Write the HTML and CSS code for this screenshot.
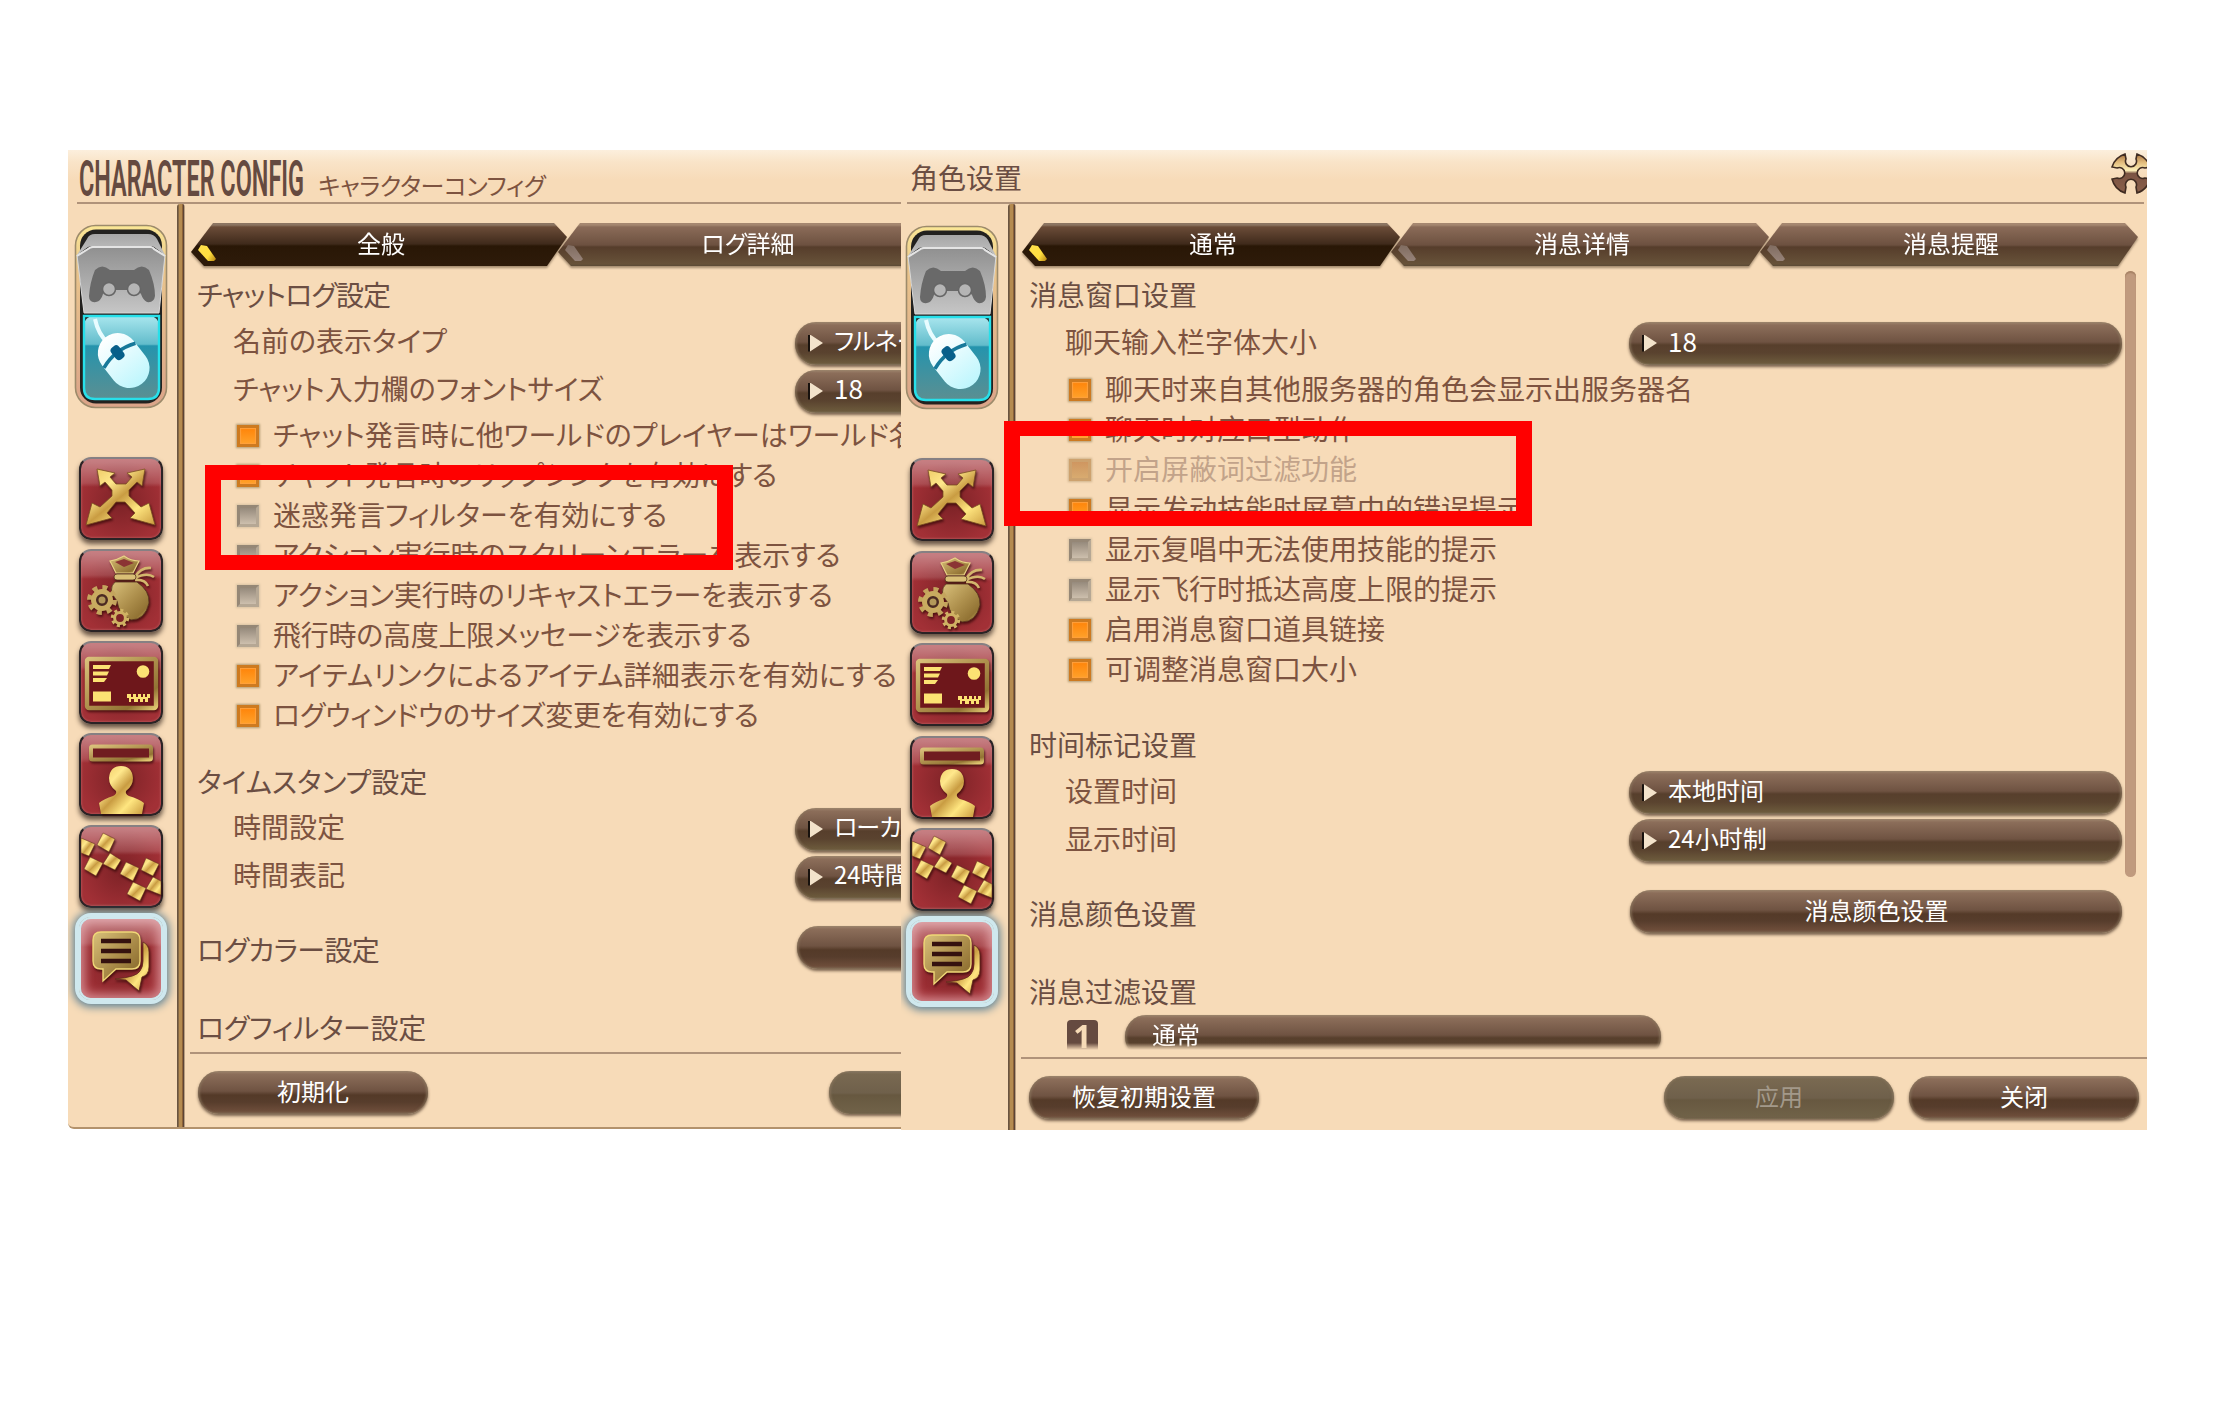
FILE: index.html
```html
<!DOCTYPE html>
<html lang="ja">
<head>
<meta charset="utf-8">
<title>Character Config</title>
<link rel="stylesheet" href="styles.css">
</head>
<body>
<svg class="defs" aria-hidden="true">
  <defs>
    <linearGradient id="gold" x1="0" y1="0" x2="1" y2="1">
      <stop offset="0" stop-color="#e9c25c"/><stop offset=".3" stop-color="#ffe88c"/><stop offset=".5" stop-color="#c99c42"/><stop offset=".72" stop-color="#ffe680"/><stop offset="1" stop-color="#c99a3e"/>
    </linearGradient>
    <linearGradient id="brass" x1="0" y1="0" x2="1" y2="1">
      <stop offset="0" stop-color="#d9c07a"/><stop offset=".5" stop-color="#ad8f4c"/><stop offset=".8" stop-color="#927334"/><stop offset="1" stop-color="#e0c670"/>
    </linearGradient>
    <linearGradient id="rim" x1="0" y1="0" x2="0" y2="1">
      <stop offset="0" stop-color="#fbe795"/><stop offset=".25" stop-color="#e9c48c"/><stop offset="1" stop-color="#dba489"/>
    </linearGradient>
    <linearGradient id="paddle" x1="0" y1="0" x2="0" y2="1">
      <stop offset="0" stop-color="#8f8f8f"/><stop offset="1" stop-color="#c6c6c6"/>
    </linearGradient>
    <linearGradient id="lid" x1="0" y1="0" x2="0" y2="1">
      <stop offset="0" stop-color="#a6a6a6"/><stop offset="1" stop-color="#c2c2c2"/>
    </linearGradient>
    <linearGradient id="glass" x1="0" y1="0" x2="0" y2="1">
      <stop offset="0" stop-color="#a9e6ee"/><stop offset=".34" stop-color="#62bccb"/><stop offset=".36" stop-color="#2594ad"/><stop offset="1" stop-color="#5b8f92"/>
    </linearGradient>
    <linearGradient id="mouseFill" x1="0" y1="0" x2="0" y2="1">
      <stop offset="0" stop-color="#ffffff"/><stop offset="1" stop-color="#bdf6fd"/>
    </linearGradient>
    <linearGradient id="cross" x1="0" y1="0" x2="0" y2="1">
      <stop offset="0" stop-color="#a5703f"/><stop offset=".2" stop-color="#e0b878"/><stop offset=".42" stop-color="#fdf0b8"/><stop offset=".5" stop-color="#7b5443"/><stop offset="1" stop-color="#8a5f4a"/>
    </linearGradient>
  </defs>

  <symbol id="switch" viewBox="0 0 94 185">
    <rect x="1.5" y="1.5" width="91" height="182" rx="20" fill="url(#rim)" stroke="#9d8b6b" stroke-width="1.6"/>
    <rect x="6" y="5.5" width="82" height="174" rx="16" fill="#22211f"/>
    <rect x="10" y="92" width="75" height="83" rx="9" fill="url(#glass)"/>
    <path d="M10 92H85V164Q85 175 74 175H21Q10 175 10 164Z" fill="none" stroke="#27e0ea" stroke-width="2.4"/>
    <path d="M21 95Q24 110 34 119" fill="none" stroke="#e8fcff" stroke-width="4"/>
    <g transform="rotate(-38 50 137)">
      <rect x="30" y="107" width="40" height="59" rx="20" fill="url(#mouseFill)"/>
      <path d="M30 130Q50 122 70 130" fill="none" stroke="#17799a" stroke-width="3.6"/>
      <rect x="45" y="119" width="10" height="15" rx="4" fill="#075f8a"/>
    </g>
    <path d="M3 31L19 22H76L91 31L85 89H10Z" fill="url(#paddle)" stroke="#d9d9d9" stroke-width="1"/>
    <path d="M13 15Q15 10 21 10H74Q80 10 83 15L91 31L80 23Q79 22 76 22H19Q16 22 14 23L3 31Z" fill="url(#lid)"/>
    <path d="M3 32L14 25Q16 23 19 23H76Q79 23 80 25L91 32" fill="none" stroke="#e4e4e4" stroke-width="2"/>
    <path d="M21 46Q28 39 36 46H60Q68 39 75 46Q81 60 81 72Q80 79 73 78Q69 76 67 70Q64 66 60 66H36Q32 66 29 70Q27 77 22 78Q15 79 15 72Q16 58 21 46Z" fill="#696969"/>
    <circle cx="35" cy="65" r="6.500" fill="#b5b5b5" stroke="#666" stroke-width="1.500"/><circle cx="60" cy="65" r="6.500" fill="#b5b5b5" stroke="#666" stroke-width="1.500"/>
  </symbol>

  <symbol id="arrows" viewBox="0 0 84 83">
    <path d="M18 12L36 16L31 20L37 27H47L53 20L48 16L66 12L63 29L58 25L50 33V39L62 50L70 46L76 68L51 61L56 56L46 45H37L28 56L33 61L7 68L13 46L21 50L33 39V33L26 25L21 29Z" fill="url(#gold)" stroke="#7b4f22" stroke-width=".8"/>
  </symbol>

  <symbol id="bag" viewBox="0 0 84 83">
    <path d="M36 33Q28 40 38 52Q40 66 52 71Q66 71 70 54Q71 42 58 33Z" fill="url(#brass)" stroke="#54321e" stroke-width=".8"/>
    <path d="M56 28Q62 18 72 19M56 29Q68 23 75 28M56 31Q66 30 69 37" fill="none" stroke="#d3b76d" stroke-width="2.6"/>
    <path d="M31 12Q38 11 45 7Q52 12 60 12L54 24H37Z" fill="url(#brass)" stroke="#e9d386" stroke-width="1.2"/>
    <path d="M36 13L45 10L55 14L45 18Z" fill="#8b3434"/>
    <rect x="35" y="25" width="22" height="6" rx="3" fill="#d9bf76" stroke="#54321e" stroke-width=".8"/>
    <circle cx="23" cy="51" r="12.500" fill="none" stroke="#c4a55d" stroke-width="5" stroke-dasharray="4.900 4.918"/>
    <circle cx="23" cy="51" r="8.500" fill="#4b2a22" stroke="#c9ab60" stroke-width="5"/>
    <circle cx="23" cy="51" r="3.500" fill="#b3985a"/>
    <circle cx="41" cy="69" r="7.500" fill="none" stroke="#d1b465" stroke-width="3.400" stroke-dasharray="2.950 2.940"/>
    <circle cx="41" cy="69" r="5.400" fill="#7e2326" stroke="#cfb163" stroke-width="3"/>
  </symbol>

  <symbol id="card" viewBox="0 0 84 83">
    <rect x="8" y="18" width="69" height="49" rx="2" fill="#6e171b" stroke="url(#brass)" stroke-width="4.400"/>
    <path d="M14 24H32L30 28H14ZM14 30.500H30L28 34.500H14ZM14 37H28L25 41H14ZM14 50.500H32V60.500H14Z" fill="#fce273"/>
    <circle cx="64" cy="30.500" r="6.300" fill="#fce273"/>
    <path d="M48 53H52V56H54V53H57V56H59V53H62V56H64V53H66V56H68V53H71V57H69V61H66V58H64V61H61V58H59V61H55V58H52V61H50V57H48Z" fill="#fce273"/>
  </symbol>

  <symbol id="person" viewBox="0 0 84 83">
    <rect x="12" y="13.500" width="60" height="13" rx="1.500" fill="#701d20" stroke="url(#brass)" stroke-width="4"/>
    <path d="M22 81L20 70Q25 66 34 63Q38 61 37 58Q30 53 30 45Q31 33 42 33Q53 33 54 45Q54 53 47 58Q46 61 50 63Q60 66 65 70L63 81Z" fill="url(#gold)"/>
  </symbol>

  <symbol id="tiles" viewBox="0 0 84 83">
    <g fill="url(#gold)" stroke="#5f2a1c" stroke-width=".5">
      <path d="M2 13L16 19L10 31L2 28Z"/>
      <path d="M24 8L36 14L30 27L18 20Z"/><path d="M31 28L42 35L36 45L24 39Z"/><path d="M11 32L24 38L17 51L5 44Z"/>
      <path d="M47 37L60 43L54 56L41 49Z"/><path d="M67 33L80 39L74 51L62 45Z"/><path d="M74 52L82 56V70L67 64Z"/><path d="M54 57L67 63L61 76L48 69Z"/>
    </g>
  </symbol>

  <symbol id="chat" viewBox="0 0 84 83">
    <path d="M64 25Q70 28 70 35V50Q70 58 63 60L60 74L47 63L36 62Q58 60 61 54Q64 50 64 44Z" fill="url(#gold)" stroke="#5f2a1c" stroke-width=".8"/>
    <path d="M22 15H53Q61 15 61 23V44Q61 52 53 52H37L24 64V52H22Q14 52 14 44V23Q14 15 22 15Z" fill="url(#brass)" stroke="#f0d777" stroke-width="1.400"/>
    <path d="M22 24H52M22 34H52M22 44H52" stroke="#35120f" stroke-width="4.400"/>
  </symbol>

  <symbol id="close" viewBox="0 0 42 43">
    <path d="M27 2A20 20 0 0 1 40 15L35 16A5.500 5.500 0 1 0 35 26L40 27A20 20 0 0 1 27 41L26 35A5.500 5.500 0 1 0 16 35L15 41A20 20 0 0 1 2 27L7 26A5.500 5.500 0 1 0 7 16L2 15A20 20 0 0 1 15 2L16 7A5.500 5.500 0 1 0 26 7Z" fill="url(#cross)" stroke="#3f2b21" stroke-width="1.600"/>
  </symbol>
</svg>

<main class="stage">

  <section class="window window--ja" lang="ja">
    <header class="titlebar">
      <svg class="wordmark" width="226" height="52"><text x="0" y="40" textLength="225" lengthAdjust="spacingAndGlyphs">CHARACTER CONFIG</text></svg>
      <h1 class="title title--sub">キャラクターコンフィグ</h1>
    </header>
    <div class="body">
      <nav class="rail">
        <svg class="switch"><use href="#switch"/></svg>
        <span class="tile"><svg><use href="#arrows"/></svg></span>
        <span class="tile"><svg><use href="#bag"/></svg></span>
        <span class="tile"><svg><use href="#card"/></svg></span>
        <span class="tile"><svg><use href="#person"/></svg></span>
        <span class="tile"><svg><use href="#tiles"/></svg></span>
        <span class="tile tile--active"><svg><use href="#chat"/></svg></span>
      </nav>
      <div class="pillar"></div>
      <div class="content">
        <div class="tabs">
          <div class="tab tab--on"><span>全般</span></div>
          <div class="tab"><span>ログ詳細</span></div>
        </div>
        <div class="pane">
          <h2 class="section snug-3">チャットログ設定</h2>
          <div class="option"><span class="label">名前の表示タイプ</span><span class="select snug-3">フルネーム</span></div>
          <div class="option"><span class="label">チャット入力欄のフォントサイズ</span><span class="select select--num">18</span></div>
          <div class="checks">
            <div class="check on"><i></i><span>チャット発言時に他ワールドのプレイヤーはワールド名</span></div>
            <div class="check on"><i></i><span class="snug-1">チャット発言時のリップシンクを有効にする</span></div>
            <div class="check"><i></i><span>迷惑発言フィルターを有効にする</span></div>
            <div class="check"><i></i><span>アクション実行時のスクリーンエラーを表示する</span></div>
            <div class="check"><i></i><span class="snug-0">アクション実行時のリキャストエラーを表示する</span></div>
            <div class="check"><i></i><span class="snug-1">飛行時の高度上限メッセージを表示する</span></div>
            <div class="check on"><i></i><span class="loose">アイテムリンクによるアイテム詳細表示を有効にする</span></div>
            <div class="check on"><i></i><span class="snug-1">ログウィンドウのサイズ変更を有効にする</span></div>
          </div>
          <h2 class="section section--time">タイムスタンプ設定</h2>
          <div class="option"><span class="label">時間設定</span><span class="select snug-3">ローカルタイム</span></div>
          <div class="option"><span class="label">時間表記</span><span class="select">24時間表記</span></div>
          <div class="option option--color"><h2 class="section snug-2">ログカラー設定</h2><span class="button button--wide"></span></div>
          <h2 class="section section--filter snug-1">ログフィルター設定</h2>
        </div>
        <footer class="footer">
          <span class="button">初期化</span>
          <span class="button button--off"></span>
        </footer>
      </div>
    </div>
  </section>

  <section class="window window--zh" lang="zh-CN">
    <header class="titlebar">
      <h1 class="title">角色设置</h1>
      <svg class="close"><use href="#close"/></svg>
    </header>
    <div class="body">
      <nav class="rail">
        <svg class="switch"><use href="#switch"/></svg>
        <span class="tile"><svg><use href="#arrows"/></svg></span>
        <span class="tile"><svg><use href="#bag"/></svg></span>
        <span class="tile"><svg><use href="#card"/></svg></span>
        <span class="tile"><svg><use href="#person"/></svg></span>
        <span class="tile"><svg><use href="#tiles"/></svg></span>
        <span class="tile tile--active"><svg><use href="#chat"/></svg></span>
      </nav>
      <div class="pillar"></div>
      <div class="content">
        <div class="tabs">
          <div class="tab tab--on"><span>通常</span></div>
          <div class="tab"><span>消息详情</span></div>
          <div class="tab"><span>消息提醒</span></div>
        </div>
        <div class="pane">
          <h2 class="section">消息窗口设置</h2>
          <div class="option"><span class="label">聊天输入栏字体大小</span><span class="select select--num">18</span></div>
          <div class="checks">
            <div class="check on"><i></i><span>聊天时来自其他服务器的角色会显示出服务器名</span></div>
            <div class="check on"><i></i><span>聊天时对应口型动作</span></div>
            <div class="check on check--off"><i></i><span>开启屏蔽词过滤功能</span></div>
            <div class="check on"><i></i><span>显示发动技能时屏幕中的错误提示</span></div>
            <div class="check"><i></i><span>显示复唱中无法使用技能的提示</span></div>
            <div class="check"><i></i><span>显示飞行时抵达高度上限的提示</span></div>
            <div class="check on"><i></i><span>启用消息窗口道具链接</span></div>
            <div class="check on"><i></i><span>可调整消息窗口大小</span></div>
          </div>
          <h2 class="section section--time">时间标记设置</h2>
          <div class="option"><span class="label">设置时间</span><span class="select">本地时间</span></div>
          <div class="option"><span class="label">显示时间</span><span class="select">24小时制</span></div>
          <div class="option option--color"><h2 class="section">消息颜色设置</h2><span class="button button--wide">消息颜色设置</span></div>
          <h2 class="section section--filter">消息过滤设置</h2>
          <div class="filter"><b>1</b><span class="filter-name">通常</span></div>
          <div class="scrollbar"></div>
        </div>
        <footer class="footer">
          <span class="button">恢复初期设置</span>
          <span class="button button--off">应用</span>
          <span class="button button--close">关闭</span>
        </footer>
      </div>
    </div>
  </section>

  <div class="marker marker--ja"></div>
  <div class="marker marker--zh"></div>
</main>
</body>
</html>
```
FILE: styles.css
```css
* { box-sizing: border-box; }
html, body { margin: 0; background: #fff; }
.defs { position: absolute; width: 0; height: 0; }

.stage {
  position: relative;
  display: flex;
  align-items: flex-start;
  width: 2231px;
  height: 1417px;
  padding: 150px 0 0 68px;
  overflow: hidden;
}

.window {
  display: flex;
  flex-direction: column;
  overflow: hidden;
  color: #7d5340;
  font-size: 28px;
  line-height: 40px;
  white-space: nowrap;
  background: linear-gradient(#fcefdd 0, #f9e4c8 12px, #f7dbb8 30px, #f7dbb8 100%);
}
.window--ja {
  width: 833px;
  height: 979px;
  border-bottom: 2px solid #b3926c;
  border-bottom-left-radius: 6px;
  font-family: "Noto Sans CJK JP", sans-serif;
  font-feature-settings: "palt";
}
.window--zh {
  width: 1246px;
  height: 980px;
  font-family: "Noto Sans CJK SC", sans-serif;
}

/* letter fitting for the Japanese lines */
.snug-0 { letter-spacing: -.1px; }
.snug-1 { letter-spacing: -.25px; }
.snug-2 { letter-spacing: -.6px; }
.snug-3 { letter-spacing: -.9px; }
.loose { letter-spacing: .2px; }

/* title bar */
.titlebar {
  display: flex;
  flex: none;
  height: 54px;
  margin-left: 9px;
  border-bottom: 2px solid #b0937a;
}
.window--zh .titlebar { margin: 0 3px 0 6px; }
.wordmark { flex: none; margin: 6px 0 -8px 2px; overflow: visible; }
.wordmark text { font: 600 50px Roboto, sans-serif; fill: #654a40; }
.title { margin: 7px 0 0 3px; font-size: 28px; font-weight: 400; color: #6b4e43; }
.title--sub { margin: 15px 0 0 13px; font-size: 24px; letter-spacing: -.35px; color: #7d5340; }
.close { flex: none; width: 42px; height: 43px; margin: 2px -8px 0 auto; }

.body { display: flex; flex: 1; }

/* category rail */
.rail {
  display: flex;
  flex: none;
  flex-direction: column;
  align-items: center;
  gap: 9px;
  width: 109px;
  padding: 20px 3px 0 0;
}
.window--zh .rail { width: 107px; gap: 9.4px; padding: 21px 6px 0 0; }
.switch { width: 94px; height: 185px; margin-bottom: 39px; }
.tile {
  flex: none;
  width: 84px;
  height: 83px;
  border: 2px solid #2a2325;
  border-top-color: #868083;
  border-radius: 12px;
  background:
    linear-gradient(rgba(255,255,255,.4), rgba(255,255,255,.14) 24px, transparent 28px),
    radial-gradient(circle at 50% 55%, #7c2226, #a23036 72%);
  box-shadow: 0 4px 5px rgba(40,25,20,.7), inset 0 0 2px 1px rgba(200,120,120,.4);
}
.tile svg { display: block; width: 84px; height: 83px; margin: -2px; filter: drop-shadow(1px 2px 1px rgba(50,5,5,.7)); }
.tile--active {
  border-color: #cfe8ee;
  box-shadow: 0 0 0 4px #cfe8ee, inset 0 0 10px 4px rgba(240,190,195,.6), 0 1px 9px 6px #5d8296;
}

.pillar {
  flex: none;
  width: 8px;
  border-radius: 3px 3px 0 0;
  background: linear-gradient(90deg, #6a5440 0 1px, #b58b50 2.5px 4.5px, #8d6238 5.5px, #5c4436 6.5px, #e8cba6 8px);
}

.content { display: flex; flex: 1; flex-direction: column; min-width: 0; padding-left: 5px; }

/* tabs */
.tabs { display: flex; flex: none; height: 67px; padding: 19px 0 0 1px; filter: drop-shadow(0 2px 1px rgba(80,60,40,.5)); }
.tab {
  flex: none;
  display: flex;
  justify-content: center;
  width: 378px;
  height: 43px;
  margin-right: -9px;
  color: #fff;
  font-size: 24px;
  line-height: 39px;
  background: linear-gradient(#a58770 0 2px, #8a6b58 4px, #6d5140 22px, #563d2b 24px, #675239 41px, #5a4a35);
  clip-path: polygon(22px 0, 365px 0, 378px 14px, 358px 100%, 13px 100%, 0 29px);
}
.window--ja .tab { width: 376px; clip-path: polygon(22px 0, 363px 0, 376px 14px, 356px 100%, 13px 100%, 0 29px); }
.tab span { position: relative; left: 2px; }
.tab::before {
  content: "";
  position: relative;
  left: 7px;
  align-self: flex-start;
  width: 18px;
  height: 17px;
  margin: 22px auto 0 0;
  background: linear-gradient(#806c60, #98847a);
  clip-path: polygon(0 5px, 3px 0, 9px 1px, 18px 14px, 16px 16px, 10px 16px);
}
.tab::after { content: ""; width: 18px; margin-left: auto; }
.tab--on { background: linear-gradient(#8c7562 0 2px, #6b4c38 4px, #3f2a1b 21px, #291706 23px, #2e1b0a 100%); }
.tab--on::before { background: linear-gradient(120deg, #ffe04e, #ffdf3f 60%, #b07c10); }

/* option list */
.pane { position: relative; flex: none; height: 781px; padding-left: 7px; overflow: hidden; }
.window--zh .pane { height: 786px; padding-left: 8px; }
.section { height: 48px; margin: 0; font-size: 28px; font-weight: 400; line-height: 46px; color: #6b4e43; }
.section--time { margin-top: 22px; line-height: 48px; }
.window--zh .section--time { margin-top: 31px; line-height: 46px; }
.section--filter { margin-top: 32px; line-height: 48px; }
.window--zh .section--filter { margin-top: 33px; line-height: 45px; }

.option { display: flex; align-items: center; height: 48px; }
.label { flex: none; width: 598px; padding-left: 36px; margin-bottom: 6px; line-height: 44px; }
.window--zh .label { width: 600px; margin-bottom: 5px; }
.option--color { margin-top: 22px; }
.window--zh .option--color { margin-top: 23px; }
.option--color .section { flex: none; width: 600px; line-height: 52px; }
.window--zh .option--color .section { width: 601px; line-height: 51px; }

.select, .button, .filter-name {
  flex: none;
  height: 43px;
  border-radius: 21px;
  color: #fff;
  font-size: 24px;
  line-height: 37px;
  background: linear-gradient(#a38a72 0, #8c6e5a 3px, #6f5342 20px, #573f2c 23px, #5a432f 31px, #6c5a3c 41px, #80705a);
  box-shadow: 0 2px 3px rgba(70,50,35,.7), inset 2px 0 2px rgba(140,120,95,.6), inset -2px 0 2px rgba(140,120,95,.6);
}
.window--ja .option .select { line-height: 36px; }
.select { display: flex; width: 493px; padding-left: 13px; }
.window--zh .option .select--num, .window--ja .option .select--num { font-size: 26px; }
.select::before {
  content: "";
  width: 15px;
  height: 17px;
  margin: 13px 11px 0 0;
  background: linear-gradient(90deg, #17110d 2px, #f3e3cb 2px);
  clip-path: polygon(0 0, 2px 0, 100% 50%, 2px 100%, 0 100%);
}

.checks { display: flex; flex-direction: column; }
.window--zh .checks { padding-top: 2px; }
.check { display: flex; align-items: center; height: 40px; padding-left: 40px; }
.window--zh .check { height: 40.1px; }
.check span { line-height: 40px; margin-bottom: 3px; }
.check i {
  flex: none;
  width: 22px;
  height: 22px;
  margin: 1px 14px 0 0;
  border: 3px solid #958776;
  border-right-color: #b5a794;
  border-bottom-color: #b5a794;
  background: linear-gradient(#968a7c, #cdbfad);
  box-shadow: 0 0 2px 1px #d9c3a4;
}
.check.on i {
  border-color: #cd7a20;
  background: linear-gradient(#ff8409, #ffa22b);
  box-shadow: inset 0 0 1px 1px #ffa03c, 0 0 2px 1px #b39b72;
}
.check--off { color: #c2a38a; }
.check--off.on i { border-color: #cda26e; background: linear-gradient(#cf9660, #d8ab70); box-shadow: 0 0 2px 1px #cfb38c; }

.filter {
  display: flex;
  align-items: flex-start;
  height: 36px;
  margin-top: -3px;
  padding-left: 38px;
  overflow: hidden;
  -webkit-mask-image: linear-gradient(#000 29px, transparent 36px);
  mask-image: linear-gradient(#000 29px, transparent 36px);
}
.filter b {
  width: 31px;
  height: 34px;
  margin: 6px 27px 0 0;
  border-radius: 4px;
  color: #f6dab6;
  font: 700 32px/32px "Open Sans", sans-serif;
  text-align: center;
  background: #654a40;
}
.filter-name { width: 536px; padding-left: 27px; margin-top: 1px; line-height: 37px; }

/* groove beside the list */
.scrollbar {
  position: absolute;
  top: 0;
  right: 11px;
  width: 11px;
  height: 606px;
  border-radius: 6px;
  background: #c09a7e;
  box-shadow: inset 0 2px 1px #a98467;
}

/* footer */
.footer { display: flex; flex: none; height: 74px; padding: 17px 0 0 8px; border-top: 2px solid #b0937a; }
.window--zh .footer { padding: 17px 8px 0 8px; }
.button {
  width: 230px;
  line-height: 39px;
  text-align: center;
  background: linear-gradient(#a38a72 0, #8c6e5a 3px, #6f5342 20px, #543a28 24px, #573d2c 31px, #6d4d3a 40px, #806a54);
}
.button--wide { width: 492px; padding-left: 1px; }
.button--off {
  margin-left: auto;
  color: #a3998a;
  background: linear-gradient(#8a7a64 0, #796951 3px, #6f604b 22px, #675840 24px, #716349);
}
.window--ja .button--off { margin-left: 401px; }
.button--close { margin-left: 15px; }

/* callout frames */
.marker { position: absolute; width: 528px; height: 105px; border: solid #f00; border-width: 15px 16px; }
.marker--ja { left: 205px; top: 465px; }
.marker--zh { left: 1004px; top: 421px; }
```
